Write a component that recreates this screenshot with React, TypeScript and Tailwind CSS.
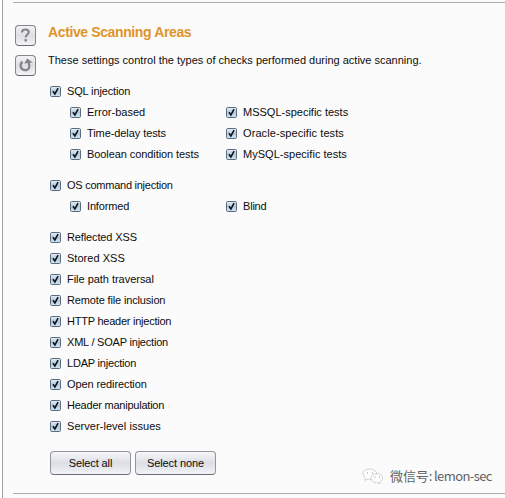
import React from "react";

function CheckBox({ label, track }: { label: string; track: string }) {
  return (
    <label className="flex h-[21px] items-center">
      <svg width="11" height="11" viewBox="0 0 11 11" className="shrink-0">
        <defs>
          <linearGradient id="box" x1="0" y1="0" x2="0" y2="1">
            <stop offset="0" stopColor="#e6eef5" />
            <stop offset="0.5" stopColor="#b4c9da" />
            <stop offset="1" stopColor="#d3e6f3" />
          </linearGradient>
        </defs>
        <rect x="0.5" y="0.5" width="10" height="10" rx="1.2" fill="url(#box)" stroke="#5a6d80" />
        <path d="M3 5.2L4.9 7.9L8.1 2.1" fill="none" stroke="#10151c" strokeWidth="1.6" />
      </svg>
      <span className={`ml-[6px] whitespace-nowrap pb-[2px] ${track}`}>{label}</span>
    </label>
  );
}

function IconButton({ children, label }: { children: React.ReactNode; label: string }) {
  return (
    <button
      aria-label={label}
      className="flex h-[21px] w-[21px] items-center justify-center rounded-[4px] border border-[#85858c] border-b-[#686870] bg-linear-to-b from-[#f4f4f6] via-[#dedfe4] to-[#f3f3f6]"
    >
      {children}
    </button>
  );
}

function PushButton({ label, track }: { label: string; track: string }) {
  return (
    <button
      className={`h-6 w-[81px] rounded-[4px] border border-[#92959d] border-b-[#6b6e78] bg-linear-to-b from-[#f8f8fa] via-[#dcdee4] to-[#f2f3f6] text-center ${track}`}
    >
      {label}
    </button>
  );
}

const otherChecks = [
  { label: "Reflected XSS", track: "tracking-[-0.13px]" },
  { label: "Stored XSS", track: "tracking-[0.03px]" },
  { label: "File path traversal", track: "tracking-[-0.03px]" },
  { label: "Remote file inclusion", track: "tracking-[-0.15px]" },
  { label: "HTTP header injection", track: "tracking-[-0.24px]" },
  { label: "XML / SOAP injection", track: "tracking-[-0.21px]" },
  { label: "LDAP injection", track: "tracking-[-0.2px]" },
  { label: "Open redirection", track: "tracking-[-0.1px]" },
  { label: "Header manipulation", track: "tracking-[-0.23px]" },
  { label: "Server-level issues", track: "tracking-[0.05px]" },
];

export default function App() {
  return (
    <div className="h-[498px] w-[505px] overflow-hidden bg-white pl-[2px] font-['Liberation_Sans',Arial,sans-serif] text-[11px] leading-[14px] text-[#0c0c0c]">
      <div className="flex h-full flex-col border-l border-[#a0a0a0] bg-[#fbfbfb] pl-[10px]">
        <div className="mt-[2px] h-px shrink-0 bg-[#a9a9a9]" />
        <div className="flex h-[490px] shrink-0">
          <div className="flex w-[35px] shrink-0 flex-col gap-[9px] pl-[2px] pt-[22px]">
            <IconButton label="Help">
              <svg width="19" height="19" viewBox="0 0 19 19" fill="none" className="shrink-0">
                <path d="M6 6.6C6 3.9 7.6 3.4 9.3 3.4C11.6 3.4 12.8 4.5 12.8 6.1C12.8 8.6 9.7 8.6 9.7 11.4" stroke="#828287" strokeWidth="2" />
                <rect x="8.4" y="13" width="2.6" height="2.6" rx="0.8" fill="#828287" />
              </svg>
            </IconButton>
            <IconButton label="Restore defaults">
              <svg width="19" height="19" viewBox="0 0 19 19" className="shrink-0">
                <path d="M6.4 5.6C3.2 9 4.8 14.2 9.2 14.2C13.2 14.2 14.3 10.3 12.6 6.8" fill="none" stroke="#85858b" strokeWidth="2.3" />
                <path d="M8.2 7.4L11.2 2.6L16.8 6.4Z" fill="#85858b" />
              </svg>
            </IconButton>
          </div>
          <div className="flex flex-col">
            <h1 className="mt-[20px] h-[18px] whitespace-nowrap text-[14px] font-bold leading-[18px] tracking-[-0.38px] text-[#df942a]">
              Active Scanning Areas
            </h1>
            <p className="mt-[12px] h-[14px] whitespace-nowrap">
              These settings control the types of checks performed during active scanning.
            </p>
            <div className="mt-[14px] pl-[2px]">
              <CheckBox label="SQL injection" track="tracking-[-0.14px]" />
              <div className="grid grid-cols-[156px_140px] pl-5">
                <CheckBox label="Error-based" track="tracking-[0.01px]" />
                <CheckBox label="MSSQL-specific tests" track="tracking-[0px]" />
                <CheckBox label="Time-delay tests" track="tracking-[-0.08px]" />
                <CheckBox label="Oracle-specific tests" track="tracking-[0.09px]" />
                <CheckBox label="Boolean condition tests" track="tracking-[-0.08px]" />
                <CheckBox label="MySQL-specific tests" track="tracking-[0.03px]" />
              </div>
            </div>
            <div className="mt-[10px] pl-[2px]">
              <CheckBox label="OS command injection" track="tracking-[-0.25px]" />
              <div className="grid grid-cols-[156px_140px] pl-5">
                <CheckBox label="Informed" track="tracking-[-0.15px]" />
                <CheckBox label="Blind" track="tracking-[-0.2px]" />
              </div>
            </div>
            <div className="mt-[10px] pl-[2px]">
              {otherChecks.map(({ label, track }) => (
                <CheckBox key={label} label={label} track={track} />
              ))}
            </div>
            <div className="mt-[14px] flex items-start gap-1 pl-[2px]">
              <PushButton label="Select all" track="tracking-[-0.1px]" />
              <PushButton label="Select none" track="tracking-[-0.1px]" />
              <div className="ml-[142px] mt-[15px] flex h-5 items-center gap-[6px]">
                <svg width="22" height="17" viewBox="0 0 22 17" fill="#fdfdfd" stroke="#b4b4b4" strokeWidth="0.8" strokeDasharray="2 0.8">
                  <path d="M3 12.3L3.5 10C-1 7 1 1 7.5 1C12 1 15 3.7 14.7 6.3C14 11 9 12 6 11Z" />
                  <path d="M18 15.7L17.8 14C22 12 22 5.7 15 5.7C7 5.7 7 14.7 15 14.6Z" />
                  <path d="M5 5h.8M10 5h.8M12.5 9h.8M17 9h.8" stroke="#777" strokeWidth="1.2" strokeDasharray="none" />
                </svg>
                <span className="whitespace-nowrap font-['Noto_Sans_CJK_SC',sans-serif] text-[13px] leading-5 tracking-[-0.6px] text-[#626262]">
                  <span className="tracking-[-0.1px]">微信号</span>: lemon-sec
                </span>
              </div>
            </div>
          </div>
        </div>
        <div className="h-px shrink-0 bg-[#a9a9a9]" />
      </div>
    </div>
  );
}
